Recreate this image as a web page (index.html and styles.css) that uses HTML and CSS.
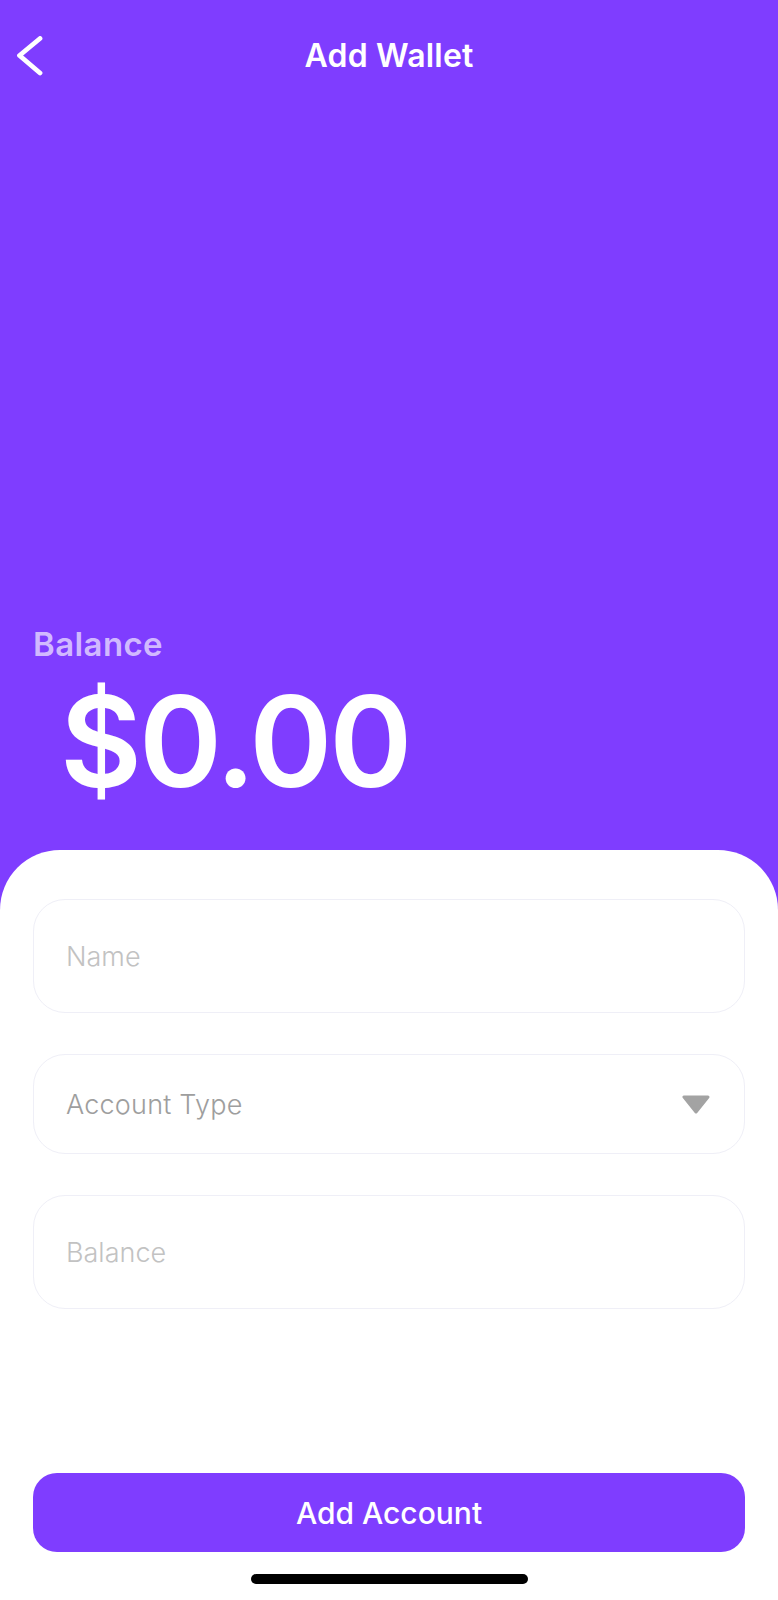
FILE: index.html
```html
<!DOCTYPE html>
<html lang="en">
<head>
<meta charset="utf-8">
<title>Add Wallet</title>
<link rel="stylesheet" href="styles.css">
</head>
<body>
<div class="screen">
  <header class="topbar">
    <button class="back" aria-label="Back">
      <svg width="28" height="40" viewBox="0 0 28 40" fill="none">
        <path d="M24 2.5 L3.5 19.5 L24 37" stroke="#fff" stroke-width="4.8" stroke-linecap="round" stroke-linejoin="round"/>
      </svg>
    </button>
    <h1 class="title">Add Wallet</h1>
    <span></span>
  </header>
  <section class="hero">
    <div class="balance-label">Balance</div>
    <div class="balance-amount">$0.00</div>
  </section>
  <section class="card">
    <div class="field field-tall"><span class="placeholder">Name</span></div>
    <div class="field field-select"><span class="select-value">Account Type</span>
      <svg class="caret" width="28" height="19" viewBox="0 0 28 19">
        <polygon points="2,2 26,2 14,17" fill="#a3a3a3" stroke="#a3a3a3" stroke-width="3" stroke-linejoin="round"/>
      </svg>
    </div>
    <div class="field field-tall"><span class="placeholder">Balance</span></div>
    <button class="primary">Add Account</button>
    <div class="home-indicator"></div>
  </section>
</div>
</body>
</html>
```

FILE: styles.css
```css
* { box-sizing: border-box; }
html, body { margin: 0; padding: 0; }
body { font-family: Inter, "Noto Sans", "Liberation Sans", sans-serif; background: #fff; }

.screen {
  width: 778px;
  height: 1600px;
  display: flex;
  flex-direction: column;
  background: #7F3DFF;
}

.topbar {
  display: grid;
  grid-template-columns: 1fr auto 1fr;
  align-items: center;
  padding-top: 36px;
  height: 76px;
}
.back {
  background: none;
  border: 0;
  padding: 0 0 0 16px;
  margin: 0;
  height: 40px;
  display: flex;
  align-items: center;
  justify-self: start;
  cursor: pointer;
}
.title {
  margin: 0;
  font-size: 32px;
  line-height: 40px;
  font-weight: 600;
  color: #fff;
  letter-spacing: 0.2px;
}

.hero {
  padding: 548px 0 46px 0;
}
.balance-label {
  padding-left: 33px;
  font-size: 33px;
  line-height: 40px;
  font-weight: 600;
  color: #D1B9FF;
  letter-spacing: 0.4px;
}
.balance-amount {
  margin-top: 14px;
  padding-left: 60px;
  font-size: 126px;
  line-height: 126px;
  font-weight: 600;
  color: #fff;
  letter-spacing: -3px;
}

.card {
  flex: 1;
  background: #fff;
  border-radius: 60px 60px 0 0;
  padding: 49px 33px 16px 33px;
  display: flex;
  flex-direction: column;
  gap: 41px;
}
.field {
  border: 1.5px solid #EFEFF7;
  border-radius: 32px;
  display: flex;
  align-items: center;
  justify-content: space-between;
  padding: 0 34px 0 32px;
  font-size: 27px;
  font-weight: 300;
}
.field-tall { height: 114px; }
.field-select { height: 100px; }
.placeholder { color: #C2C2C2; }
.select-value { color: #9E9E9E; letter-spacing: 0.2px; }
.caret { display: block; }

.primary {
  margin-top: auto;
  height: 79px;
  border: 0;
  border-radius: 24px;
  background: #7F3DFF;
  color: #fff;
  font-family: inherit;
  font-size: 30px;
  font-weight: 500;
  cursor: pointer;
}
.home-indicator {
  margin: -19px auto 0 auto;
  width: 277px;
  height: 10px;
  border-radius: 5px;
  background: #000;
}
```
